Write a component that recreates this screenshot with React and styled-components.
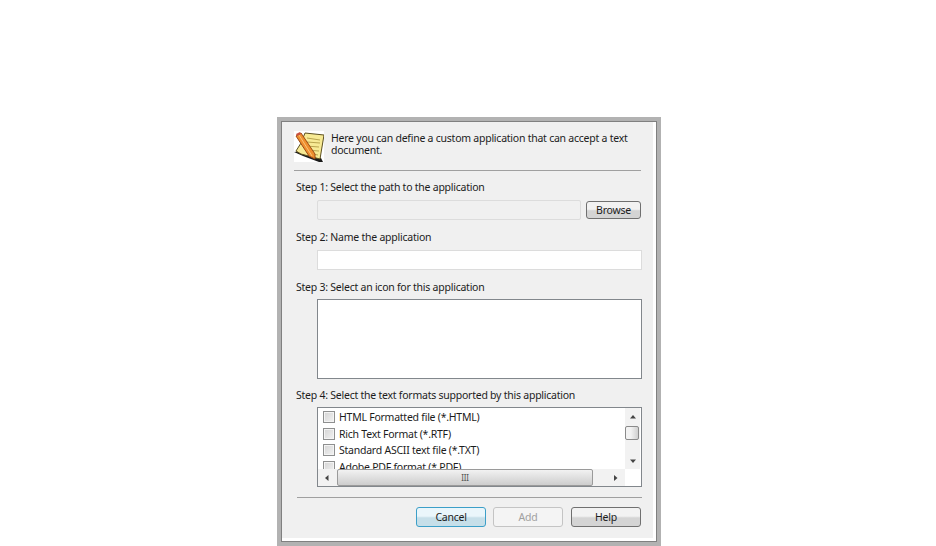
import styled, { createGlobalStyle } from "styled-components";

const GlobalStyle = createGlobalStyle`
    html, body {
        margin: 0;
        padding: 0;
        background: white;
    }
    body {
        height: 546px;
        overflow: hidden;
        font-family: "Noto Sans", "DejaVu Sans", sans-serif;
    }
`

const formats = [
    "HTML Formatted file (*.HTML)",
    "Rich Text Format (*.RTF)",
    "Standard ASCII text file (*.TXT)",
    "Adobe PDF format (*.PDF)",
];

const NotepadIcon = () => (
    <svg width="30" height="31" viewBox="0 0 30 31">
        <rect width="30" height="31" fill="#fff" />
        <path d="M0 21 L9 25 L25 31 L29 31 L27 27 L8 20 Z" fill="#1a1a1a" />
        <path d="M11 2 L30 4 L26 28 L7 23 L2 20 L7 12 Z" fill="#f7ea94" stroke="#5c5020" strokeWidth="1" />
        <path d="M13 7 L26 9 M13 11 L26 12 M12 15 L25 16 M11 19 L25 20 M13 22 L24 24" stroke="#b9a54e" strokeWidth="1" />
        <path d="M2 5 L7 2 L21 23 L21 28 L15 25 Z" fill="#ee8f2e" stroke="#9c4a16" strokeWidth="1" />
        <path d="M5 4 L18 25" stroke="#f9c37a" strokeWidth="1" />
        <path d="M2 3 L6 1 L7 3 L3 5 Z" fill="#c9503f" />
    </svg>
);

const Arrow = ({ dir }) => {
    const points = {
        up: "1,5.5 4,2 7,5.5",
        down: "1,2.5 7,2.5 4,6",
        left: "4.5,1 1,4 4.5,7",
        right: "1,1 4.5,4 1,7",
    };
    return (
        <svg width="8" height="8" viewBox="0 0 8 8">
            <polygon points={points[dir]} fill="#444" />
        </svg>
    );
};

const App = () => {
    return (
        <>
            <GlobalStyle />
            <Dialog>
                <Frame>
                    <Inner>
                        <Header>
                            <NotepadIcon />
                            <Intro>Here you can define a custom application that can accept a text document.</Intro>
                        </Header>
                        <Rule />
                        <StepLabel>Step 1: Select the path to the application</StepLabel>
                        <PathRow>
                            <PathInput />
                            <Button $width="55px" $height="18px">Browse</Button>
                        </PathRow>
                        <StepLabel $top="11px">Step 2: Name the application</StepLabel>
                        <NameInput />
                        <StepLabel $top="11px">Step 3: Select an icon for this application</StepLabel>
                        <IconPane />
                        <StepLabel>Step 4: Select the text formats supported by this application</StepLabel>
                        <ListBox>
                            <ListRows>
                                {formats.map(name => (
                                    <ListRow key={name}>
                                        <Check />
                                        <span>{name}</span>
                                    </ListRow>
                                ))}
                            </ListRows>
                            <VScroll>
                                <ScrollEnd $h="18px"><Arrow dir="up" /></ScrollEnd>
                                <VThumb />
                                <ScrollGap />
                                <ScrollEnd $h="17px"><Arrow dir="down" /></ScrollEnd>
                            </VScroll>
                            <HScroll>
                                <ScrollEnd $w="19px"><Arrow dir="left" /></ScrollEnd>
                                <HThumb><Grip>III</Grip></HThumb>
                                <RightEnd $w="32px"><Arrow dir="right" /></RightEnd>
                            </HScroll>
                        </ListBox>
                        <BottomRule />
                        <Footer>
                            <CancelButton $width="70px" $height="20px" $focus>Cancel</CancelButton>
                            <Button $width="70px" $height="20px" $disabled>Add</Button>
                            <Button $width="70px" $height="20px">Help</Button>
                        </Footer>
                    </Inner>
                </Frame>
            </Dialog>
        </>
    )
}

const Dialog = styled.div`
    box-sizing: border-box;
    width: 384px;
    height: 429px;
    margin: 117px 0 0 277px;
    border: 4px solid #b2b2b2;
`
const Frame = styled.div`
    box-sizing: border-box;
    height: 100%;
    border: 1px solid #808080;
    background: #f0f0f0;
    box-shadow: inset -3px -3px 0 #fff;
`
const Inner = styled.div`
    padding: 9px 15px 0 12px;
    font-size: 10.5px;
    letter-spacing: -0.24px;
    line-height: 12px;
    color: #1c1c1c;
`
const Header = styled.div`
    display: flex;
    gap: 7px;
    height: 31px;
`
const Intro = styled.div`
    width: 300px;
    padding-top: 1px;
`
const Rule = styled.div`
    height: 1px;
    margin-top: 8px;
    background: #a0a0a0;
`
const BottomRule = styled(Rule)`
    margin: 10px 0 0 3px;
    width: 345px;
`
const StepLabel = styled.div`
    margin: ${props => props.$top || "10px"} 0 0 2px;
    height: 12px;
`
const PathRow = styled.div`
    display: flex;
    align-items: center;
    gap: 5px;
    margin: 7px 0 0 23px;
`
const PathInput = styled.div`
    box-sizing: border-box;
    flex: none;
    width: 264px;
    height: 20px;
    border: 1px solid #dcdcdc;
    border-radius: 2px;
    background: #f0f0f0;
`
const NameInput = styled.div`
    box-sizing: border-box;
    width: 325px;
    height: 20px;
    margin: 7px 0 0 23px;
    border: 1px solid #dcdcdc;
    background: #fff;
`
const IconPane = styled.div`
    box-sizing: border-box;
    width: 325px;
    height: 80px;
    margin: 6px 0 0 23px;
    border: 1px solid #82878c;
    background: #fff;
`
const ListBox = styled.div`
    box-sizing: border-box;
    display: grid;
    grid-template-columns: 307px 16px;
    grid-template-rows: 61px 17px;
    width: 325px;
    height: 80px;
    margin: 6px 0 0 23px;
    border: 1px solid #82878c;
    background: #fff;
`
const ListRows = styled.div`
    overflow: hidden;
    padding: 1px 0 0 5px;
`
const ListRow = styled.div`
    display: flex;
    align-items: center;
    gap: 4px;
    height: 16.5px;
    white-space: nowrap;
`
const Check = styled.div`
    box-sizing: border-box;
    flex: none;
    width: 12px;
    height: 12px;
    border: 1px solid #8e8f8f;
    background: linear-gradient(135deg, #d4d4d4, #f2f2f2);
    box-shadow: inset 0 0 0 1px #f4f4f4;
`
const VScroll = styled.div`
    display: flex;
    flex-direction: column;
    width: 15px;
    background: #f2f2f2;
`
const HScroll = styled.div`
    display: flex;
    background: #f2f2f2;
`
const ScrollEnd = styled.div`
    flex: none;
    display: flex;
    align-items: center;
    justify-content: center;
    width: ${props => props.$w || "auto"};
    height: ${props => props.$h || "auto"};
`
const RightEnd = styled(ScrollEnd)`
    box-sizing: border-box;
    justify-content: flex-end;
    padding-right: 4px;
`
const ScrollGap = styled.div`
    flex: 1;
`
const VThumb = styled.div`
    box-sizing: border-box;
    flex: none;
    width: 14px;
    height: 14px;
    border: 1px solid #8a8a8a;
    border-radius: 2px;
    background: linear-gradient(90deg, #f2f2f2 40%, #cfcfcf);
`
const HThumb = styled.div`
    box-sizing: border-box;
    flex: 1;
    display: flex;
    align-items: center;
    justify-content: center;
    border: 1px solid #9a9a9a;
    border-radius: 2px;
    background: linear-gradient(#f2f2f2, #cdcdcd);
`
const Grip = styled.span`
    font-size: 8px;
    color: #555;
`
const Footer = styled.div`
    display: flex;
    justify-content: flex-end;
    gap: 8px;
    margin: 9px 0 0 0;
`
const Button = styled.div`
    box-sizing: border-box;
    flex: none;
    display: flex;
    align-items: center;
    justify-content: center;
    width: ${props => props.$width};
    height: ${props => props.$height};
    border: 1px solid ${props => props.$focus ? "#3c9fc8" : props.$disabled ? "#c4c4c4" : "#707070"};
    border-radius: 3px;
    color: ${props => props.$disabled ? "#a0a0a0" : "#1c1c1c"};
    background: ${props => props.$disabled
        ? "#f4f4f4"
        : props.$focus
            ? "linear-gradient(#eaf6fb 45%, #c6dfe9 55%)"
            : "linear-gradient(#f2f2f2 45%, #d4d4d4 55%)"};
`
const CancelButton = styled(Button)`
    margin-right: -1px;
`
export default App;
